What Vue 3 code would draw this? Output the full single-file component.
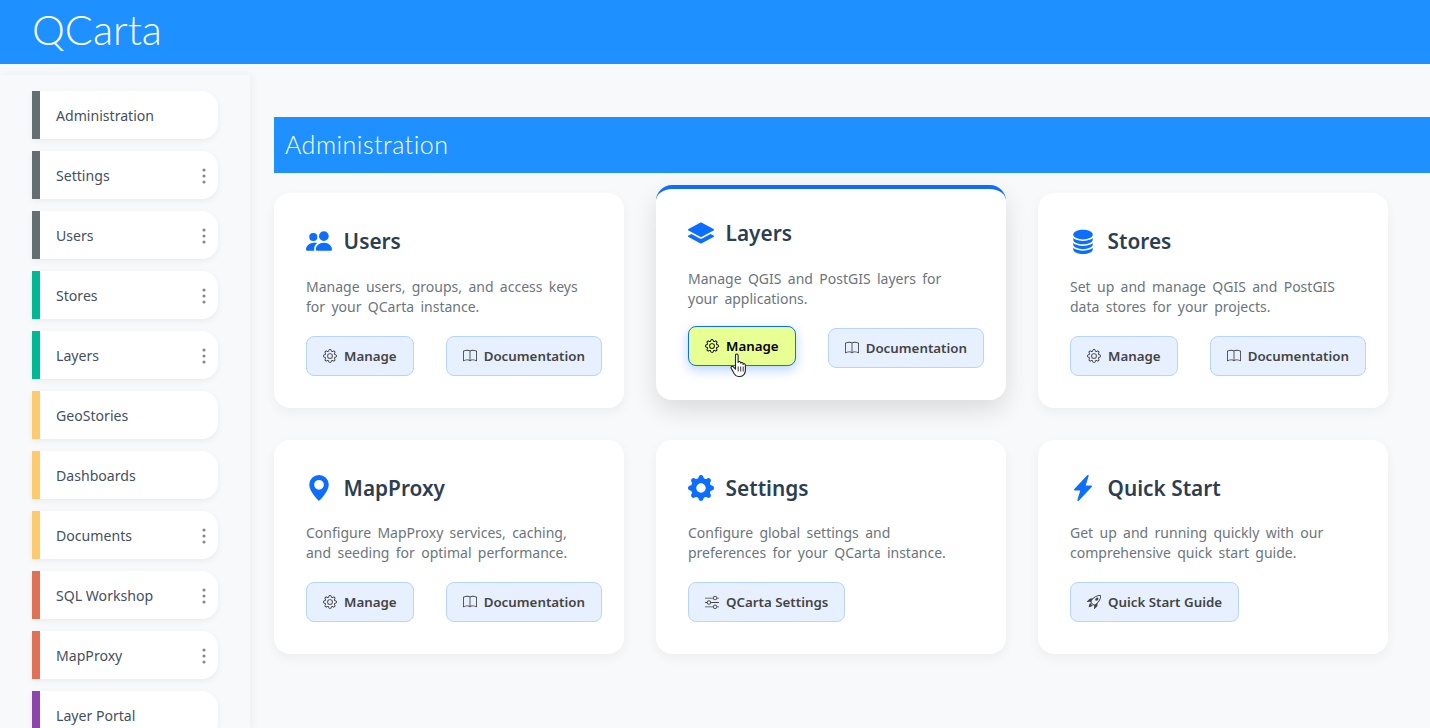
<script setup>
const sideItems = [
  { label: 'Administration', color: '#636e72', menu: false },
  { label: 'Settings', color: '#636e72', menu: true },
  { label: 'Users', color: '#636e72', menu: true },
  { label: 'Stores', color: '#00b894', menu: true },
  { label: 'Layers', color: '#00b894', menu: true },
  { label: 'GeoStories', color: '#fdcb6e', menu: false },
  { label: 'Dashboards', color: '#fdcb6e', menu: false },
  { label: 'Documents', color: '#fdcb6e', menu: true },
  { label: 'SQL Workshop', color: '#e17055', menu: true },
  { label: 'MapProxy', color: '#e17055', menu: true },
  { label: 'Layer Portal', color: '#8e44ad', menu: false }
]

const icons = {
  users: ['M7 14s-1 0-1-1 1-4 5-4 5 3 5 4-1 1-1 1H7zm4-6a3 3 0 1 0 0-6 3 3 0 0 0 0 6zm-5.784 6A2.238 2.238 0 0 1 5 13c0-1.355.68-2.75 1.936-3.72A6.325 6.325 0 0 0 5 9c-4 0-5 3-5 4s1 1 1 1h4.216zM4.5 8a2.5 2.5 0 1 0 0-5 2.5 2.5 0 0 0 0 5z'],
  layers: [
    'M7.765 1.559a.5.5 0 0 1 .47 0l7.5 4a.5.5 0 0 1 0 .882l-7.5 4a.5.5 0 0 1-.47 0l-7.5-4a.5.5 0 0 1 0-.882l7.5-4z',
    'm2.125 8.567-1.86.992a.5.5 0 0 0 0 .882l7.5 4a.5.5 0 0 0 .47 0l7.5-4a.5.5 0 0 0 0-.882l-1.86-.992-5.17 2.756a1.5 1.5 0 0 1-1.41 0l-5.17-2.756z'
  ],
  stores: [
    'M3.904 1.777C4.978 1.289 6.427 1 8 1s3.022.289 4.096.777C13.125 2.245 14 2.993 14 4s-.875 1.755-1.904 2.223C11.022 6.711 9.573 7 8 7s-3.022-.289-4.096-.777C2.875 5.755 2 5.007 2 4s.875-1.755 1.904-2.223Z',
    'M2 6.161V7c0 1.007.875 1.755 1.904 2.223C4.978 9.71 6.427 10 8 10s3.022-.289 4.096-.777C13.125 8.755 14 8.007 14 7v-.839c-.457.432-1.004.751-1.49.972C11.278 7.693 9.682 8 8 8s-3.278-.307-4.51-.867c-.486-.22-1.033-.54-1.49-.972Z',
    'M2 9.161V10c0 1.007.875 1.755 1.904 2.223C4.978 12.711 6.427 13 8 13s3.022-.289 4.096-.777C13.125 11.755 14 11.007 14 10v-.839c-.457.432-1.004.751-1.49.972-1.232.56-2.828.867-4.51.867s-3.278-.307-4.51-.867c-.486-.22-1.033-.54-1.49-.972Z',
    'M2 12.161V13c0 1.007.875 1.755 1.904 2.223C4.978 15.711 6.427 16 8 16s3.022-.289 4.096-.777C13.125 14.755 14 14.007 14 13v-.839c-.457.432-1.004.751-1.49.972-1.232.56-2.828.867-4.51.867s-3.278-.307-4.51-.867c-.486-.22-1.033-.54-1.49-.972Z'
  ],
  geo: ['M8 16s6-5.686 6-10A6 6 0 0 0 2 6c0 4.314 6 10 6 10zm0-7a3 3 0 1 1 0-6 3 3 0 0 1 0 6z'],
  cog: ['M9.405 1.05c-.413-1.4-2.397-1.4-2.81 0l-.1.34a1.464 1.464 0 0 1-2.105.872l-.31-.17c-1.283-.698-2.686.705-1.987 1.987l.169.311c.446.82.023 1.841-.872 2.105l-.34.1c-1.4.413-1.4 2.397 0 2.81l.34.1a1.464 1.464 0 0 1 .872 2.105l-.17.31c-.698 1.283.705 2.686 1.987 1.987l.311-.169a1.464 1.464 0 0 1 2.105.872l.1.34c.413 1.4 2.397 1.4 2.81 0l.1-.34a1.464 1.464 0 0 1 2.105-.872l.31.17c1.283.698 2.686-.705 1.987-1.987l-.169-.311a1.464 1.464 0 0 1 .872-2.105l.34-.1c1.4-.413 1.4-2.397 0-2.81l-.34-.1a1.464 1.464 0 0 1-.872-2.105l.17-.31c.698-1.283-.705-2.686-1.987-1.987l-.311.169a1.464 1.464 0 0 1-2.105-.872l-.1-.34zM8 10.93a2.929 2.929 0 1 1 0-5.86 2.929 2.929 0 0 1 0 5.858z'],
  bolt: ['M11.251.068a.5.5 0 0 1 .227.58L9.677 6.5H13a.5.5 0 0 1 .364.843l-8 8.5a.5.5 0 0 1-.842-.49L6.323 9.5H3a.5.5 0 0 1-.364-.843l8-8.5a.5.5 0 0 1 .615-.09z'],
  gear: [
    'M8 4.754a3.246 3.246 0 1 0 0 6.492 3.246 3.246 0 0 0 0-6.492zM5.754 8a2.246 2.246 0 1 1 4.492 0 2.246 2.246 0 0 1-4.492 0z',
    'M9.796 1.343c-.527-1.79-3.065-1.79-3.592 0l-.094.319a.873.873 0 0 1-1.255.52l-.292-.16c-1.64-.892-3.433.902-2.54 2.541l.159.292a.873.873 0 0 1-.52 1.255l-.319.094c-1.79.527-1.79 3.065 0 3.592l.319.094a.873.873 0 0 1 .52 1.255l-.16.292c-.892 1.64.901 3.434 2.541 2.54l.292-.159a.873.873 0 0 1 1.255.52l.094.319c.527 1.79 3.065 1.79 3.592 0l.094-.319a.873.873 0 0 1 1.255-.52l.292.16c1.64.893 3.434-.902 2.54-2.541l-.159-.292a.873.873 0 0 1 .52-1.255l.319-.094c1.79-.527 1.79-3.065 0-3.592l-.319-.094a.873.873 0 0 1-.52-1.255l.16-.292c.893-1.64-.902-3.433-2.541-2.54l-.292.159a.873.873 0 0 1-1.255-.52l-.094-.319zm-2.633.283c.246-.835 1.428-.835 1.674 0l.094.319a1.873 1.873 0 0 0 2.693 1.115l.291-.16c.764-.415 1.6.42 1.184 1.185l-.159.292a1.873 1.873 0 0 0 1.116 2.692l.318.094c.835.246.835 1.428 0 1.674l-.319.094a1.873 1.873 0 0 0-1.115 2.693l.16.291c.415.764-.42 1.6-1.185 1.184l-.291-.159a1.873 1.873 0 0 0-2.693 1.116l-.094.318c-.246.835-1.428.835-1.674 0l-.094-.319a1.873 1.873 0 0 0-2.692-1.115l-.292.16c-.764.415-1.6-.42-1.184-1.185l.159-.291A1.873 1.873 0 0 0 1.945 8.93l-.319-.094c-.835-.246-.835-1.428 0-1.674l.319-.094A1.873 1.873 0 0 0 3.06 4.377l-.16-.292c-.415-.764.42-1.6 1.185-1.184l.292.159a1.873 1.873 0 0 0 2.692-1.115l.094-.319z'
  ],
  book: ['M1 2.828c.885-.37 2.154-.769 3.388-.893 1.33-.134 2.458.063 3.112.752v9.746c-.935-.53-2.12-.603-3.213-.493-1.18.12-2.37.461-3.287.811V2.828zm7.5-.141c.654-.689 1.782-.886 3.112-.752 1.234.124 2.503.523 3.388.893v9.923c-.918-.35-2.107-.692-3.287-.81-1.094-.111-2.278-.039-3.213.492V2.687zM8 1.783C7.015.936 5.587.81 4.287.94c-1.514.153-3.042.672-3.994 1.105A.5.5 0 0 0 0 2.5v11a.5.5 0 0 0 .707.455c.882-.4 2.303-.881 3.68-1.02 1.409-.142 2.59.087 3.223.877a.5.5 0 0 0 .78 0c.633-.79 1.814-1.019 3.222-.877 1.378.139 2.8.62 3.681 1.02A.5.5 0 0 0 16 13.5v-11a.5.5 0 0 0-.293-.455c-.952-.433-2.48-.952-3.994-1.105C10.413.809 8.985.936 8 1.783z'],
  sliders: ['M11.5 2a1.5 1.5 0 1 0 0 3 1.5 1.5 0 0 0 0-3zM9.05 3a2.5 2.5 0 0 1 4.9 0H16v1h-2.05a2.5 2.5 0 0 1-4.9 0H0V3h9.05zM4.5 7a1.5 1.5 0 1 0 0 3 1.5 1.5 0 0 0 0-3zM2.05 8a2.5 2.5 0 0 1 4.9 0H16v1H6.95a2.5 2.5 0 0 1-4.9 0H0V8h2.05zm9.45 4a1.5 1.5 0 1 0 0 3 1.5 1.5 0 0 0 0-3zm-2.45 1a2.5 2.5 0 0 1 4.9 0H16v1h-2.05a2.5 2.5 0 0 1-4.9 0H0v-1h9.05z'],
  rocket: [
    'M9.752 6.193c.599.6 1.73.437 2.528-.362.798-.799.96-1.932.362-2.531-.599-.6-1.73-.438-2.528.361-.798.8-.96 1.933-.362 2.532Z',
    'M15.811 3.312c-.363 1.534-1.334 3.626-3.64 6.218l-.24 2.408a2.56 2.56 0 0 1-.732 1.526L8.817 15.85a.51.51 0 0 1-.867-.434l.27-1.899c.04-.28-.013-.593-.131-.956a9.42 9.42 0 0 0-.249-.657l-.082-.202c-.815-.197-1.578-.662-2.191-1.277-.614-.615-1.079-1.379-1.275-2.195l-.203-.083a9.556 9.556 0 0 0-.655-.248c-.363-.119-.675-.172-.955-.132l-1.896.27A.51.51 0 0 1 .15 7.17l2.382-2.386c.41-.41.947-.67 1.524-.734h.006l2.4-.238C9.005 1.55 11.087.582 12.623.208c.89-.217 1.59-.232 2.08-.188.244.023.435.06.57.093.067.017.12.033.16.045.184.06.279.13.351.295l.029.073a3.475 3.475 0 0 1 .157.721c.055.485.051 1.178-.159 2.065Zm-4.828 7.475.04-.04-.107 1.081a1.536 1.536 0 0 1-.44.913l-1.298 1.3.054-.38c.072-.506-.034-.993-.172-1.418a8.548 8.548 0 0 0-.164-.45c.738-.065 1.462-.38 2.087-1.006ZM5.205 5c-.625.626-.94 1.351-1.004 2.09a8.497 8.497 0 0 0-.45-.164c-.424-.138-.91-.244-1.416-.172l-.38.054 1.3-1.3c.245-.246.566-.401.91-.44l1.08-.107-.04.039Zm9.406-3.961c-.38-.034-.967-.027-1.746.163-1.558.38-3.917 1.496-6.937 4.521-.62.62-.799 1.34-.687 2.051.107.676.483 1.362 1.048 1.928.564.565 1.25.941 1.924 1.049.71.112 1.429-.067 2.048-.688 3.079-3.083 4.192-5.444 4.556-6.987.183-.771.18-1.345.138-1.713a2.835 2.835 0 0 0-.045-.283 3.078 3.078 0 0 0-.3-.041Z',
    'M7.009 12.139a7.632 7.632 0 0 1-1.804-1.352A7.568 7.568 0 0 1 3.794 8.86c-1.102.992-1.965 5.054-1.839 5.18.125.126 3.936-.896 5.054-1.902Z'
  ]
}

const manageDocs = [
  { label: 'Manage', icon: 'gear' },
  { label: 'Documentation', icon: 'book' }
]

const cards = [
  { title: 'Users', icon: 'users', lines: ['Manage users, groups, and access keys', 'for your QCarta instance.'], buttons: manageDocs },
  { title: 'Layers', icon: 'layers', hover: true, lines: ['Manage QGIS and PostGIS layers for', 'your applications.'], buttons: manageDocs },
  { title: 'Stores', icon: 'stores', lines: ['Set up and manage QGIS and PostGIS', 'data stores for your projects.'], buttons: manageDocs },
  { title: 'MapProxy', icon: 'geo', lines: ['Configure MapProxy services, caching,', 'and seeding for optimal performance.'], buttons: manageDocs },
  { title: 'Settings', icon: 'cog', lines: ['Configure global settings and', 'preferences for your QCarta instance.'], buttons: [{ label: 'QCarta Settings', icon: 'sliders' }] },
  { title: 'Quick Start', icon: 'bolt', lines: ['Get up and running quickly with our', 'comprehensive quick start guide.'], buttons: [{ label: 'Quick Start Guide', icon: 'rocket' }] }
]
</script>

<template>
  <div class="page">
    <header class="topbar">
      <span class="logo">QCarta</span>
    </header>

    <div class="body">
      <aside class="sidebar">
        <div v-for="item in sideItems" :key="item.label" class="side-item" :style="{ borderLeftColor: item.color }">
          <span>{{ item.label }}</span>
          <svg v-if="item.menu" class="kebab" viewBox="0 0 4 16" width="4" height="16">
            <circle cx="2" cy="2" r="1.6" />
            <circle cx="2" cy="8" r="1.6" />
            <circle cx="2" cy="14" r="1.6" />
          </svg>
        </div>
      </aside>

      <main class="content">
        <h1 class="section-title">Administration</h1>

        <div class="cards">
          <section v-for="card in cards" :key="card.title" class="card" :class="{ 'card-hover': card.hover }">
            <h2 class="card-title">
              <svg class="card-icon" viewBox="0 0 16 16" width="26" height="26">
                <path v-for="d in icons[card.icon]" :key="d" :d="d" />
              </svg>
              {{ card.title }}
            </h2>
            <p class="card-text">{{ card.lines[0] }}<br>{{ card.lines[1] }}</p>
            <div class="card-buttons">
              <a
                v-for="(btn, i) in card.buttons"
                :key="btn.label"
                class="btn"
                :class="{ 'btn-hover': card.hover && i === 0 }"
              >
                <svg class="btn-icon" viewBox="0 0 16 16" width="14" height="14">
                  <path v-for="d in icons[btn.icon]" :key="d" :d="d" />
                </svg>
                {{ btn.label }}
                <!-- mouse pointer from the screenshot -->
                <svg v-if="card.hover && i === 0" class="pointer" viewBox="0 0 18 25" width="18" height="25">
                  <path d="M5.5 2.2c0-1.6 2.6-1.6 2.6 0v7.2c.2-1.3 2.4-1.3 2.5.1l.1.8c.3-1.2 2.3-1.1 2.4.3v.8c.4-1 2.2-.8 2.3.6v5.2c0 3-1.9 6.3-5.4 6.3H8.4c-2 0-3.100-1-4-2.500L1.200 15.300c-.8-1.400 1-2.800 2.200-1.500l2.100 2.300V2.200z" fill="#fff" stroke="#222" stroke-width="1.1" stroke-linejoin="round" />
                  <path d="M8.200 13.500v5M10.700 13.500v5M13.200 13.500v5" fill="none" stroke="#222" stroke-width=".9" />
                </svg>
              </a>
            </div>
          </section>
        </div>
      </main>
    </div>
  </div>
</template>

<style>
html,
body {
  margin: 0;
  background: #f8f9fa;
}
</style>

<style scoped>
.page {
  height: 728px;
  overflow: hidden;
  background: #f8f9fa;
  font-family: "Noto Sans", "Open Sans", sans-serif;
}

.topbar {
  height: 64px;
  box-sizing: border-box;
  background: #1e90ff;
  padding: 0 0 5px 32px;
  display: flex;
  align-items: center;
}

.logo {
  font-family: Lato, "Noto Sans", sans-serif;
  font-weight: 300;
  font-size: 41.5px;
  line-height: 1;
  color: #fff;
}

.body {
  display: flex;
}

.sidebar {
  width: 250px;
  height: 653px;
  margin-top: 11px;
  padding: 16px 0 0 32px;
  box-sizing: border-box;
  flex: none;
  display: flex;
  flex-direction: column;
  gap: 12px;
  overflow: hidden;
  background: #f8f9fa;
  box-shadow: 2px 0 8px rgba(0, 0, 0, 0.05);
}

.side-item {
  flex: none;
  width: 186px;
  height: 48px;
  box-sizing: border-box;
  display: flex;
  align-items: center;
  justify-content: space-between;
  padding: 0 12px 0 16px;
  background: #fff;
  border-left: 8px solid;
  border-radius: 0 16px 16px 0;
  box-shadow: 0 2px 6px rgba(0, 0, 0, 0.06);
  font-size: 14.1px;
  color: #45505f;
}

.kebab {
  fill: #8a8a8a;
  margin-top: 2px;
}

.content {
  flex: 1;
  min-width: 0;
  padding: 53px 0 0 24px;
}

.section-title {
  margin: 0 0 20px;
  height: 56px;
  box-sizing: border-box;
  padding: 0 0 2px 11px;
  display: flex;
  align-items: center;
  background: #1e90ff;
  color: #fff;
  font-family: Lato, "Noto Sans", sans-serif;
  font-weight: 300;
  font-size: 25px;
  letter-spacing: 0.5px;
}

.cards {
  width: 1114px;
  display: grid;
  grid-template-columns: repeat(3, 350px);
  grid-auto-rows: 214.5px;
  column-gap: 32px;
  row-gap: 32px;
}

.card {
  box-sizing: border-box;
  padding: 32px;
  background: #fff;
  border-radius: 16px;
  box-shadow: 0 4px 12px rgba(0, 0, 0, 0.05);
}

.card-hover {
  position: relative;
  transform: translateY(-8px);
  border-top: 4px solid #0d6efd;
  padding-top: 28px;
  box-shadow: 0 10px 24px rgba(0, 0, 0, 0.12);
}

.card-title {
  margin: 0 0 19.9px;
  height: 32px;
  display: flex;
  align-items: center;
  gap: 11.6px;
  font-size: 20.8px;
  font-weight: 600;
  color: #2c3e50;
}

.card-icon {
  fill: #0d6efd;
  flex: none;
}

.card-text {
  margin: 0 0 19px;
  font-size: 14px;
  line-height: 20px;
  word-spacing: 2.7px;
  white-space: nowrap;
  color: #6c757d;
}

.card-buttons {
  display: flex;
  gap: 32px;
}

.btn {
  flex: none;
  height: 40px;
  box-sizing: border-box;
  display: flex;
  align-items: center;
  gap: 7px;
  padding: 0 16px;
  background: #e7f0fe;
  border: 1px solid #b6d4fe;
  border-radius: 8px;
  font-size: 13.33px;
  font-weight: 600;
  color: #444;
  white-space: nowrap;
}

.btn-icon {
  fill: currentColor;
  flex: none;
}

.btn-hover {
  position: relative;
  transform: translateY(-2px);
  background: #e8ff94;
  border-color: #0d6efd;
  color: #000;
  box-shadow: 0 4px 12px rgba(13, 110, 253, 0.3);
}

.pointer {
  position: absolute;
  left: 41px;
  top: 26px;
}
</style>
